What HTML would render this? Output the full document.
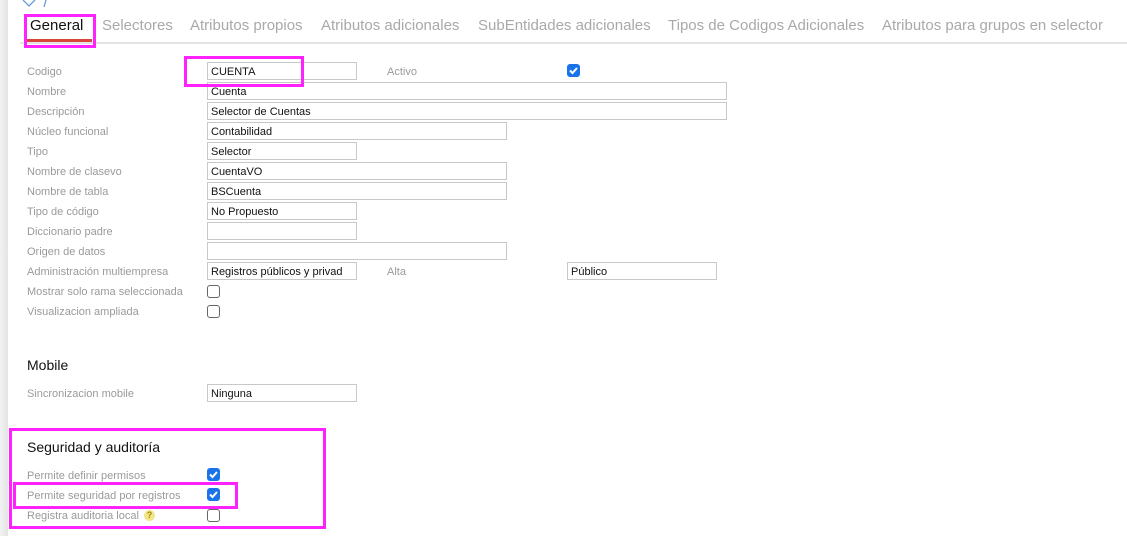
<!DOCTYPE html>
<html><head><meta charset="utf-8"><style>
*{margin:0;padding:0;box-sizing:border-box}
body{width:1127px;height:536px;background:#fff;font-family:"Liberation Sans",sans-serif;position:relative;overflow:hidden}
.a{position:absolute;white-space:nowrap}
.strip{left:0;top:0;width:8px;height:536px;background:linear-gradient(90deg,#f2f2f2,#e4e4e4)}
.tab{top:17px;font-size:15px;color:#a9a9a9}
.lbl{font-size:11px;color:#9a9a9a;line-height:13px;margin-top:1px}
.in{height:18px;border:1px solid #c8c8c8;font-size:11px;color:#111;padding:3px 0 0 3px;line-height:13px;overflow:hidden}
.cb{width:13px;height:13px;border:1px solid #666;border-radius:3px;background:#fff}
.ck{width:13px;height:13px;border-radius:3px;background:#1a73e8}
.h{font-size:14px;color:#111}
.m{border:3px solid #ff22ff}
</style></head><body>
<div class="a strip"></div>
<svg class="a" style="left:22px;top:0" width="30" height="8"><path d="M1 0 L7 6 L13 0" fill="none" stroke="#6a9bd8" stroke-width="1.3"/><path d="M24 0 L22 7" stroke="#6a9bd8" stroke-width="1.3"/></svg>
<div class="a" style="left:20px;top:42px;width:1107px;height:2px;background:#e3e3e3"></div>
<div class="a tab" style="left:30px;color:#111">General</div>
<div class="a" style="left:25px;top:39px;width:67px;height:3px;background:#d9463b"></div>
<div class="a tab" style="left:102px">Selectores</div>
<div class="a tab" style="left:190px">Atributos propios</div>
<div class="a tab" style="left:321px">Atributos adicionales</div>
<div class="a tab" style="left:478px">SubEntidades adicionales</div>
<div class="a tab" style="left:668px">Tipos de Codigos Adicionales</div>
<div class="a tab" style="left:882px">Atributos para grupos en selector</div>

<div class="a lbl" style="left:27px;top:65px">Codigo</div>
<div class="a in" style="left:207px;top:62px;width:150px">CUENTA</div>
<div class="a lbl" style="left:387px;top:65px">Activo</div>
<div class="a ck" style="left:567px;top:64px"></div>
<div class="a lbl" style="left:27px;top:85px">Nombre</div>
<div class="a in" style="left:207px;top:82px;width:520px">Cuenta</div>
<div class="a lbl" style="left:27px;top:105px">Descripción</div>
<div class="a in" style="left:207px;top:102px;width:520px">Selector de Cuentas</div>
<div class="a lbl" style="left:27px;top:125px">Núcleo funcional</div>
<div class="a in" style="left:207px;top:122px;width:300px">Contabilidad</div>
<div class="a lbl" style="left:27px;top:145px">Tipo</div>
<div class="a in" style="left:207px;top:142px;width:150px">Selector</div>
<div class="a lbl" style="left:27px;top:165px">Nombre de clasevo</div>
<div class="a in" style="left:207px;top:162px;width:300px">CuentaVO</div>
<div class="a lbl" style="left:27px;top:185px">Nombre de tabla</div>
<div class="a in" style="left:207px;top:182px;width:300px">BSCuenta</div>
<div class="a lbl" style="left:27px;top:205px">Tipo de código</div>
<div class="a in" style="left:207px;top:202px;width:150px">No Propuesto</div>
<div class="a lbl" style="left:27px;top:225px">Diccionario padre</div>
<div class="a in" style="left:207px;top:222px;width:150px"></div>
<div class="a lbl" style="left:27px;top:245px">Origen de datos</div>
<div class="a in" style="left:207px;top:242px;width:300px"></div>
<div class="a lbl" style="left:27px;top:265px">Administración multiempresa</div>
<div class="a in" style="left:207px;top:262px;width:150px">Registros públicos y privad</div>
<div class="a lbl" style="left:387px;top:265px">Alta</div>
<div class="a in" style="left:567px;top:262px;width:150px">Público</div>
<div class="a lbl" style="left:27px;top:285px">Mostrar solo rama seleccionada</div>
<div class="a cb" style="left:207px;top:285px"></div>
<div class="a lbl" style="left:27px;top:305px">Visualizacion ampliada</div>
<div class="a cb" style="left:207px;top:305px"></div>

<div class="a h" style="left:27px;top:357px">Mobile</div>
<div class="a lbl" style="left:27px;top:387px">Sincronizacion mobile</div>
<div class="a in" style="left:207px;top:384px;width:150px">Ninguna</div>

<div class="a h" style="left:27px;top:439px">Seguridad y auditoría</div>
<div class="a lbl" style="left:27px;top:469px">Permite definir permisos</div>
<div class="a ck" style="left:207px;top:468px"></div>
<div class="a lbl" style="left:27px;top:489px">Permite seguridad por registros</div>
<div class="a ck" style="left:207px;top:488px"></div>
<div class="a lbl" style="left:27px;top:509px">Registra auditoria local</div>
<div class="a" style="left:144px;top:510px;width:11px;height:11px;border-radius:50%;background:#f3e68a;color:#a08a10;font-size:9px;font-weight:bold;text-align:center;line-height:11px">?</div>
<div class="a cb" style="left:207px;top:509px"></div>

<svg class="a" style="left:0;top:0" width="1127" height="536">
<defs><path id="c" d="M3 6.5 L5.5 9 L10 4" fill="none" stroke="#fff" stroke-width="2"/></defs>
<use href="#c" x="567" y="64"/><use href="#c" x="207" y="468"/><use href="#c" x="207" y="488"/>
</svg>

<div class="a m" style="left:24px;top:14px;width:72px;height:34px"></div>
<div class="a m" style="left:184px;top:56px;width:120px;height:31px"></div>
<div class="a m" style="left:9px;top:428px;width:317px;height:101px"></div>
<div class="a m" style="left:13px;top:482px;width:225px;height:27px"></div>
</body></html>
